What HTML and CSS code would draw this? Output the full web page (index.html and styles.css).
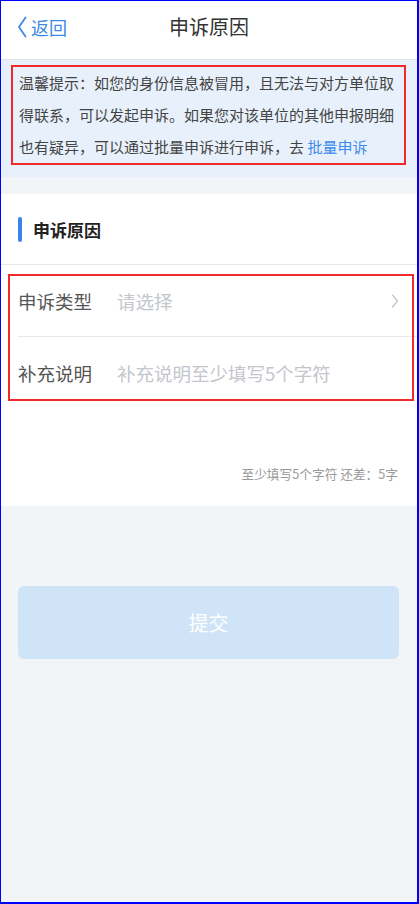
FILE: index.html
```html
<!DOCTYPE html>
<html lang="zh-CN">
<head>
<meta charset="utf-8">
<title>申诉原因</title>
<link rel="stylesheet" href="styles.css">
</head>
<body>
<div class="page">
  <header class="header">
    <div class="back">
      <svg class="back-icon" width="10" height="22" viewBox="0 0 10 22"><path d="M8.5 1.5 L2 11 L8.5 20.5" fill="none" stroke="#3d8ae6" stroke-width="1.8" stroke-linecap="round" stroke-linejoin="round"/></svg>
      <span>返回</span>
    </div>
    <h1 class="title">申诉原因</h1>
  </header>

  <section class="tip">
    <p class="tip-box">温馨提示：如您的身份信息被冒用，且无法与对方单位取得联系，可以发起申诉。如果您对该单位的其他申报明细也有疑异，可以通过批量申诉进行申诉，去 <span class="tip-link">批量申诉</span></p>
  </section>

  <section class="card">
    <div class="card-title"><span class="bar"></span><span>申诉原因</span></div>
    <div class="rows">
      <div class="row row-first">
        <span class="label">申诉类型</span>
        <span class="placeholder">请选择</span>
        <svg class="arrow" width="8" height="14" viewBox="0 0 8 14"><path d="M1.5 1 L6.5 7 L1.5 13" fill="none" stroke="#c8c8cc" stroke-width="1.3" stroke-linecap="round" stroke-linejoin="round"/></svg>
      </div>
      <div class="row">
        <span class="label">补充说明</span>
        <span class="placeholder">补充说明至少填写5个字符</span>
      </div>
      <div class="highlight"></div>
    </div>
    <div class="counter">至少填写5个字符 还差：5字</div>
  </section>

  <div class="actions">
    <button class="submit">提交</button>
  </div>
</div>
</body>
</html>
```

FILE: styles.css
```css
* { box-sizing: border-box; }
html, body { margin: 0; padding: 0; }
body {
  font-family: "Noto Sans CJK SC", "Noto Sans", sans-serif;
  background: #ffffff;
}
.page {
  width: 419px;
  height: 904px;
  border-style: solid;
  border-color: #0000ff;
  border-width: 1px 2px 2px 1px;
  background: #f2f5f7;
  overflow: hidden;
}
.header {
  height: 59px;
  background: #fff;
  border-bottom: 1px solid #dfe3e8;
  position: relative;
  display: flex;
  align-items: center;
  justify-content: center;
  padding-bottom: 6px;
}
.back {
  position: absolute;
  left: 16px;
  top: 14px;
  display: flex;
  align-items: center;
  gap: 4px;
  color: #3d8ae6;
  font-size: 18px;
  line-height: 24px;
}
.back-icon { display: block; }
.title {
  margin: 0;
  font-size: 20px;
  font-weight: 400;
  color: #333;
  line-height: 26px;
}
.tip {
  background: #e8f1fb;
  padding: 5px 11px 12px 10px;
}
.tip-box {
  margin: 0;
  border: 2px solid #f02a2a;
  padding: 0 4px 0 6px;
  font-size: 15px;
  line-height: 32px;
  color: #444;
}
.tip-link { color: #3b8beb; }
.card {
  margin-top: 17px;
  background: #fff;
}
.card-title {
  height: 71px;
  display: flex;
  align-items: center;
  gap: 11px;
  padding-left: 17px;
  border-bottom: 1px solid #e6e8eb;
  font-size: 17px;
  font-weight: 700;
  color: #222;
}
.bar {
  width: 4px;
  height: 25px;
  border-radius: 2px;
  background: #3b82f0;
}
.rows { position: relative; }
.row {
  height: 72px;
  margin-left: 17px;
  display: flex;
  align-items: center;
  padding-right: 18px;
}
.row-first { border-bottom: 1px solid #e6e8eb; }
.label {
  width: 99px;
  flex: none;
  font-size: 18.5px;
  color: #555;
}
.placeholder {
  flex: 1;
  font-size: 18.5px;
  color: #c3c6cc;
}
.arrow { display: block; flex: none; }
.highlight {
  position: absolute;
  left: 7px;
  right: 3px;
  top: 9px;
  bottom: 8px;
  border: 2px solid #f02a2a;
  pointer-events: none;
}
.counter {
  padding: 55px 19px 22px 0;
  text-align: right;
  font-size: 12.7px;
  line-height: 20px;
  color: #999;
}
.actions {
  padding: 80px 18px 0 17px;
}
.submit {
  width: 100%;
  height: 73px;
  border: 0;
  border-radius: 6px;
  background: #d0e4f7;
  color: #fff;
  font-family: "Noto Sans CJK SC", "Noto Sans", sans-serif;
  font-size: 20px;
  display: block;
}
```
